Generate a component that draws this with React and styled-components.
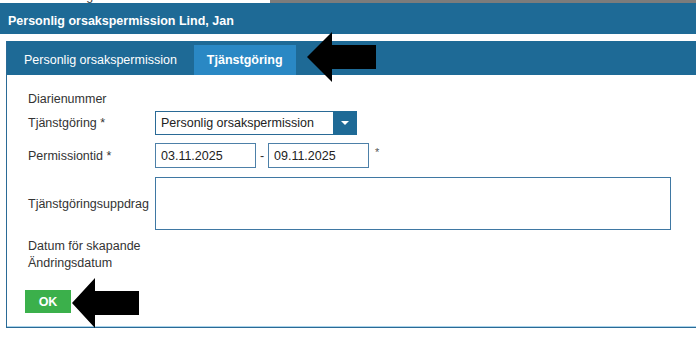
import React from "react";
import styled, { createGlobalStyle } from "styled-components";

const Global = createGlobalStyle`
  html, body { margin: 0; padding: 0; background: #fff; }
  body { font-family: "Liberation Sans", Arial, sans-serif; font-size: 12.5px; color: #333; }
  * { box-sizing: border-box; }
`;

const Page = styled.div`
  position: relative;
  width: 696px;
  height: 337px;
  overflow: hidden;
  background: #fff;
`;

const TopStrip = styled.div`
  display: flex;
  height: 3px;
  overflow: hidden;
`;

const StripText = styled.span`
  display: block;
  width: 270px;
  flex: none;
  font-size: 12.5px;
  line-height: 12px;
  margin-top: -10px;
  color: #3a3a3a;
  white-space: nowrap;
  background: #fff;
`;

const StripFill = styled.div`
  flex: 1;
  background: #7c7c7c;
`;

const TitleBar = styled.div`
  height: 31px;
  background: #1e6a96;
  color: #fff;
  font-weight: bold;
  font-size: 12.5px;
  display: flex;
  align-items: center;
  padding-left: 8px;
  padding-top: 5px;
`;

const Panel = styled.div`
  margin: 7px 0 0 6px;
  height: 287px;
  border-left: 1px solid #2a6a96;
  border-bottom: 1px solid #2a6a96;
  box-shadow: inset 0 -1px 0 #a9d3ea;
`;

const TabBar = styled.div`
  height: 34px;
  background: #1e6a96;
  display: flex;
  align-items: flex-end;
  gap: 4px;
  padding-left: 4px;
`;

const Tab = styled.div`
  height: 30px;
  line-height: 30px;
  padding: 0 13px;
  color: #fff;
  font-size: 12.5px;
  font-weight: ${(p) => (p.$active ? "bold" : "normal")};
  background: ${(p) => (p.$active ? "#2a88c4" : "transparent")};
`;

const Form = styled.div`
  display: flex;
  flex-direction: column;
  padding: 12px 0 0 21px;
`;

const Row = styled.div`
  display: flex;
  align-items: center;
  height: ${(p) => p.$h}px;
  margin-top: ${(p) => p.$mt || 0}px;
`;

const Label = styled.div`
  width: 127px;
  flex: none;
  color: #333;
  font-size: 12.5px;
  white-space: nowrap;
`;

const Select = styled.div`
  width: 202px;
  height: 24px;
  border: 1px solid #2a6a96;
  display: flex;
  align-items: center;
  padding-left: 5px;
  color: #222;
`;

const SelectText = styled.span`
  flex: 1;
`;

const Caret = styled.div`
  width: 24px;
  height: 24px;
  margin: -1px -1px -1px 0;
  background: #1e6a96;
  display: flex;
  align-items: center;
  justify-content: center;
  &::after {
    content: "";
    border-left: 4px solid transparent;
    border-right: 4px solid transparent;
    border-top: 4px solid #fff;
  }
`;

const DateInput = styled.div`
  width: 101px;
  height: 25px;
  border: 1px solid #4d80a8;
  padding-left: 5px;
  display: flex;
  align-items: center;
  color: #222;
`;

const Dash = styled.span`
  width: 12px;
  text-align: center;
  color: #333;
`;

const Star = styled.span`
  margin-left: 6px;
  align-self: flex-start;
  margin-top: 3px;
  font-size: 11px;
  color: #555;
`;

const TextArea = styled.textarea`
  width: 516px;
  height: 53px;
  border: 1px solid #3f78a3;
  resize: none;
  outline: none;
  font-family: inherit;
  padding: 2px;
`;

const OkButton = styled.button`
  margin-left: -3px;
  width: 46px;
  height: 23px;
  border: none;
  background: #3bb04b;
  color: #fff;
  font-family: inherit;
  font-weight: bold;
  font-size: 12.5px;
  padding: 0;
`;

const ArrowSvg = styled.svg`
  position: absolute;
  left: 0;
  top: 0;
  pointer-events: none;
`;

export default function App() {
  return (
    <Page>
      <Global />
      <TopStrip>
        <StripText>inn för ersättning 13.10.2025 13:56:37 mmss</StripText>
        <StripFill />
      </TopStrip>
      <TitleBar>Personlig orsakspermission Lind, Jan</TitleBar>
      <Panel>
        <TabBar>
          <Tab>Personlig orsakspermission</Tab>
          <Tab $active>Tjänstgöring</Tab>
        </TabBar>
        <Form>
          <Row $h={24}>
            <Label>Diarienummer</Label>
          </Row>
          <Row $h={24}>
            <Label>Tjänstgöring *</Label>
            <Select>
              <SelectText>Personlig orsakspermission</SelectText>
              <Caret />
            </Select>
          </Row>
          <Row $h={25} $mt={8}>
            <Label>Permissiontid *</Label>
            <DateInput>03.11.2025</DateInput>
            <Dash>-</Dash>
            <DateInput>09.11.2025</DateInput>
            <Star>*</Star>
          </Row>
          <Row $h={53} $mt={9}>
            <Label>Tjänstgöringsuppdrag</Label>
            <TextArea />
          </Row>
          <Row $h={17} $mt={7}>
            <Label>Datum för skapande</Label>
          </Row>
          <Row $h={17}>
            <Label>Ändringsdatum</Label>
          </Row>
          <Row $h={23} $mt={19}>
            <OkButton>OK</OkButton>
          </Row>
        </Form>
      </Panel>
      <ArrowSvg width="696" height="337" viewBox="0 0 696 337">
        <polygon points="307,57 332,32 332,45 376,45 376,69 332,69 332,82" fill="#000" />
        <polygon points="72,303 95,278 95,291 139,291 139,315 95,315 95,328" fill="#000" />
      </ArrowSvg>
    </Page>
  );
}
